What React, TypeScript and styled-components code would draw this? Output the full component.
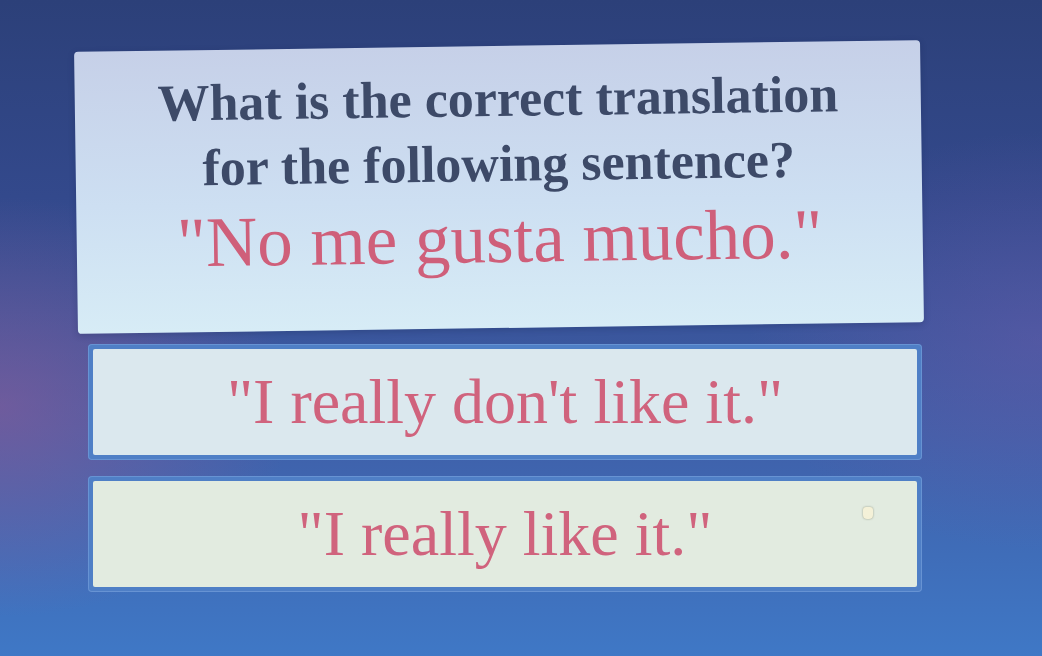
import { createGlobalStyle, styled } from 'styled-components'

const GlobalStyle = createGlobalStyle`
	html, body {
		margin: 0;
		padding: 0;
		width: 100%;
		height: 100%;
		overflow: hidden;
	}
	#root {
		height: 100%;
	}
`

const answers = [
	{ id: 'a', text: '"I really don\'t like it."', tint: '#dbe8ee' },
	{ id: 'b', text: '"I really like it."', tint: '#e2ebe0' },
]

const App = () => {
	return (
		<>
			<GlobalStyle />
			<Stage>
				<QuestionCard>
					<Prompt>
						What is the correct translation
						<br />
						for the following sentence?
					</Prompt>
					<Phrase>"No me gusta mucho."</Phrase>
				</QuestionCard>

				<Answers>
					{answers.map((answer, i) => (
						<AnswerFrame key={answer.id}>
							<AnswerButton $tint={answer.tint}>
								{answer.text}
								{i === 1 && <Pointer />}
							</AnswerButton>
						</AnswerFrame>
					))}
				</Answers>
			</Stage>
		</>
	)
}

const Stage = styled.div`
	width: 1042px;
	height: 656px;
	box-sizing: border-box;
	padding: 46px 120px 0 76px;
	display: flex;
	flex-direction: column;
	align-items: stretch;
	gap: 16px;
	background:
		radial-gradient(ellipse 420px 300px at 0% 62%, rgba(150, 90, 150, 0.55), transparent 70%),
		radial-gradient(ellipse 420px 300px at 100% 52%, rgba(110, 90, 170, 0.45), transparent 70%),
		linear-gradient(180deg, #2c4079 0%, #33498c 30%, #3f5fa8 65%, #3f78c6 100%);
	font-family: 'Liberation Serif', 'Times New Roman', serif;
`

const QuestionCard = styled.section`
	height: 282px;
	box-sizing: border-box;
	padding: 20px 0 0;
	border-radius: 4px;
	background: linear-gradient(180deg, #c6d0e8 0%, #cddff2 55%, #d7ecf6 100%);
	text-align: center;
	transform: rotate(-0.8deg);
	box-shadow: 0 2px 6px rgba(20, 30, 70, 0.25);
`

const Prompt = styled.h1`
	margin: 0;
	font-size: 52px;
	line-height: 65px;
	font-weight: 700;
	color: #3d4a68;
`

const Phrase = styled.p`
	margin: 4px 0 0;
	font-size: 71px;
	line-height: 76px;
	font-weight: 400;
	color: #cf5f7a;
`

const Answers = styled.div`
	display: flex;
	flex-direction: column;
	gap: 16px;
	padding: 0 0 0 12px;
`

const AnswerFrame = styled.div`
	padding: 5px;
	border-radius: 4px;
	background: #4f7fc6;
	box-shadow: inset 0 0 0 1px rgba(120, 160, 220, 0.6);
`

const AnswerButton = styled.button<{ $tint: string }>`
	position: relative;
	display: block;
	width: 100%;
	height: 106px;
	border: none;
	border-radius: 2px;
	background: ${(p) => p.$tint};
	font-family: inherit;
	font-size: 64px;
	color: #d0637d;
	text-align: center;
	cursor: pointer;
`

const Pointer = styled.span`
	position: absolute;
	top: 26px;
	right: 44px;
	width: 10px;
	height: 12px;
	border-radius: 3px 3px 4px 4px;
	background: #f4f1d8;
	box-shadow: 0 0 2px rgba(90, 90, 60, 0.6);
`

export default App
